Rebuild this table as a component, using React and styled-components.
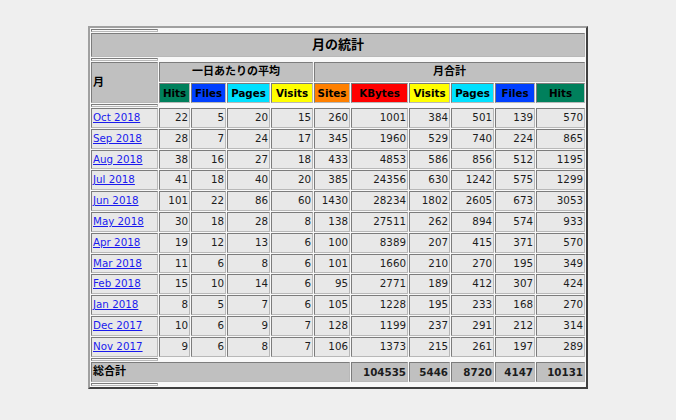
import React from "react";
import styled, { createGlobalStyle, css } from "styled-components";

const GlobalStyle = createGlobalStyle`
  body {
    margin: 0;
    background: #efefef;
    font-family: "DejaVu Sans", Verdana, "Noto Sans CJK JP", sans-serif;
  }
`;

const Page = styled.div`
  padding-top: 26px;
`;

const StatsTable = styled.table`
  width: 498px;
  margin: 0 auto;
  table-layout: fixed;
  border-collapse: separate;
  border-spacing: 1px;
  border: 2px solid;
  border-color: #a0a0a0 #404040 #404040 #a0a0a0;
  background: #f8f8f8;
`;

const Col = styled.col`
  width: ${({ $w }) => $w}px;
`;

const cell = css`
  box-sizing: border-box;
  padding: 1px;
  border: 1px solid;
  border-color: #7c7c7c #b8b8b8 #b8b8b8 #7c7c7c;
  font-size: 10.3px;
  line-height: 16px;
  white-space: nowrap;
  overflow: hidden;
`;

const Spacer = styled.th`
  ${cell};
  height: 3px;
  padding: 0;
  line-height: 0;
  font-size: 0;
`;

const Title = styled.th`
  ${cell};
  background: #c0c0c0;
  font-size: 13px;
  line-height: 20px;
  font-weight: bold;
  text-align: center;
  color: #000;
`;

const GroupHead = styled.th`
  ${cell};
  background: #c0c0c0;
  font-size: 11px;
  font-weight: bold;
  text-align: ${({ $align }) => $align || "center"};
  color: #000;
`;

const ColorHead = styled.th`
  ${cell};
  background: ${({ $bg }) => $bg};
  font-weight: bold;
  text-align: center;
  color: #000;
`;

const MonthCell = styled.td`
  ${cell};
  line-height: 15.8px;
  background: #e8e8e8;
  text-align: left;
`;

const MonthLink = styled.a`
  color: #1a1aee;
  text-decoration: underline;
`;

const NumCell = styled.td`
  ${cell};
  line-height: 15.8px;
  background: #e8e8e8;
  text-align: right;
  color: #1c1c1c;
`;

const TotalLabel = styled.th`
  ${cell};
  background: #c0c0c0;
  font-size: 11px;
  font-weight: bold;
  text-align: left;
  color: #000;
`;

const TotalNum = styled.th`
  ${cell};
  background: #c0c0c0;
  font-weight: bold;
  text-align: right;
  color: #1c1c1c;
`;

const HIT = "#00805c";
const FILE = "#0040ff";
const PAGE = "#00e0ff";
const VISIT = "#ffff00";
const SITE = "#ff8000";
const KBYTE = "#ff0000";

const widths = [67, 31, 35, 43, 42, 36, 57, 41, 43, 40, 49];

const daily = [
  ["Hits", HIT],
  ["Files", FILE],
  ["Pages", PAGE],
  ["Visits", VISIT],
];

const monthly = [
  ["Sites", SITE],
  ["KBytes", KBYTE],
  ["Visits", VISIT],
  ["Pages", PAGE],
  ["Files", FILE],
  ["Hits", HIT],
];

const rows = [
  ["Oct 2018", 22, 5, 20, 15, 260, 1001, 384, 501, 139, 570],
  ["Sep 2018", 28, 7, 24, 17, 345, 1960, 529, 740, 224, 865],
  ["Aug 2018", 38, 16, 27, 18, 433, 4853, 586, 856, 512, 1195],
  ["Jul 2018", 41, 18, 40, 20, 385, 24356, 630, 1242, 575, 1299],
  ["Jun 2018", 101, 22, 86, 60, 1430, 28234, 1802, 2605, 673, 3053],
  ["May 2018", 30, 18, 28, 8, 138, 27511, 262, 894, 574, 933],
  ["Apr 2018", 19, 12, 13, 6, 100, 8389, 207, 415, 371, 570],
  ["Mar 2018", 11, 6, 8, 6, 101, 1660, 210, 270, 195, 349],
  ["Feb 2018", 15, 10, 14, 6, 95, 2771, 189, 412, 307, 424],
  ["Jan 2018", 8, 5, 7, 6, 105, 1228, 195, 233, 168, 270],
  ["Dec 2017", 10, 6, 9, 7, 128, 1199, 237, 291, 212, 314],
  ["Nov 2017", 9, 6, 8, 7, 106, 1373, 215, 261, 197, 289],
];

const totals = [104535, 5446, 8720, 4147, 10131];

function SpacerRow() {
  return (
    <tr>
      <Spacer />
    </tr>
  );
}

export default function App() {
  return (
    <Page>
      <GlobalStyle />
      <StatsTable>
        <colgroup>
          {widths.map((w, i) => (
            <Col key={i} $w={w} />
          ))}
        </colgroup>
        <tbody>
          <SpacerRow />
          <tr>
            <Title colSpan={11}>月の統計</Title>
          </tr>
          <SpacerRow />
          <tr>
            <GroupHead rowSpan={2} $align="left">
              月
            </GroupHead>
            <GroupHead colSpan={4}>一日あたりの平均</GroupHead>
            <GroupHead colSpan={6}>月合計</GroupHead>
          </tr>
          <tr>
            {daily.map(([label, bg], i) => (
              <ColorHead key={"d" + i} $bg={bg}>
                {label}
              </ColorHead>
            ))}
            {monthly.map(([label, bg], i) => (
              <ColorHead key={"m" + i} $bg={bg}>
                {label}
              </ColorHead>
            ))}
          </tr>
          <SpacerRow />
          {rows.map(([month, ...nums]) => (
            <tr key={month}>
              <MonthCell>
                <MonthLink href="#">{month}</MonthLink>
              </MonthCell>
              {nums.map((n, i) => (
                <NumCell key={i}>{n}</NumCell>
              ))}
            </tr>
          ))}
          <SpacerRow />
          <tr>
            <TotalLabel colSpan={6}>総合計</TotalLabel>
            {totals.map((n, i) => (
              <TotalNum key={i}>{n}</TotalNum>
            ))}
          </tr>
          <SpacerRow />
        </tbody>
      </StatsTable>
    </Page>
  );
}
